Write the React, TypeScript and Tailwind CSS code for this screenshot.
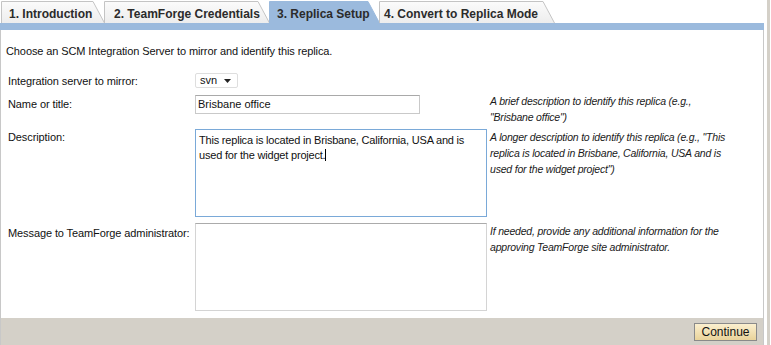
import React from 'react'

const font = { fontFamily: '"Liberation Sans", Arial, sans-serif' }

type TabDef = { label: string; width: number; active?: boolean; pad: number }

const tabs: TabDef[] = [
  { label: '1. Introduction', width: 104, pad: 8 },
  { label: '2. TeamForge Credentials', width: 166, pad: 10 },
  { label: '3. Replica Setup', width: 111, pad: 8, active: true },
  { label: '4. Convert to Replica Mode', width: 176, pad: 5 },
]

function Tab({ t }: { t: TabDef }) {
  const w = t.width
  return (
    <div className="relative h-[22px] shrink-0 -mr-[1px]" style={{ width: w }}>
      <svg className="absolute inset-0" width={w} height={22}>
        <defs>
          <linearGradient id="tabg" x1="0" y1="0" x2="0" y2="1">
            <stop offset="0" stopColor="#fbfbfb" />
            <stop offset="1" stopColor="#ededed" />
          </linearGradient>
        </defs>
        <path
          d={`M0.5,22 V0.5 H${w - 12} L${w - 0.5},22`}
          fill={t.active ? '#9bbadd' : 'url(#tabg)'}
          stroke={t.active ? '#9bbadd' : '#c4c4c4'}
        />
      </svg>
      <span
        className="relative block pt-[4px] text-[12px] font-bold text-[#2b2b2b] whitespace-nowrap"
        style={{ paddingLeft: t.pad }}
      >
        {t.label}
      </span>
    </div>
  )
}

function Help({ children }: { children: React.ReactNode }) {
  return (
    <div className="text-[10.5px] tracking-[-0.2px] italic leading-[16px] text-[#1a1a1a] pl-[1px]">
      {children}
    </div>
  )
}

const row = 'grid grid-cols-[187px_294px_1fr] pl-[7px] items-start text-[11px] leading-[13px]'

export default function App() {
  return (
    <div className="w-[771px] h-[345px] bg-white flex overflow-hidden text-[#111]" style={font}>
      <div className="w-[764px] flex flex-col">
        <div className="h-[23px] pt-[1px] pl-[1px] flex items-end">
          {tabs.map(t => <Tab key={t.label} t={t} />)}
        </div>
        <div className="h-[7px] bg-[#9bbadd]" />
        <div className="flex-1 border-l border-r border-[#c8c8c8] flex flex-col">
          <div className="text-[11px] tracking-[-0.1px] pl-[5px] mt-[15px] leading-[13px]">
            Choose an SCM Integration Server to mirror and identify this replica.
          </div>

          <div className={`${row} mt-[15px] h-[15px]`}>
            <div className="pt-[2px] tracking-[-0.1px]">Integration server to mirror:</div>
            <div className="w-[43px] h-[15px] border border-[#dedede] rounded-[2px] flex items-center pl-[4px]">
              <span>svn</span>
              <svg className="ml-[7px]" width="7" height="4" viewBox="0 0 7 4">
                <path d="M0,0 H7 L3.5,4 Z" fill="#222" />
              </svg>
            </div>
            <div />
          </div>

          <div className={`${row} mt-[5px] h-[32px]`}>
            <div className="pt-[5px] tracking-[-0.1px]">Name or title:</div>
            <div className="pt-[2px]">
              <div className="w-[225px] h-[19px] border border-[#c9c9c9] border-t-[#a9a9a9] px-[2px] leading-[17px]">
                Brisbane office
              </div>
            </div>
            <Help>
              A brief description to identify this replica (e.g.,
              <br />
              "Brisbane office")
            </Help>
          </div>

          <div className={`${row} mt-[4px] h-[88px]`}>
            <div className="pt-[2px] tracking-[-0.1px]">Description:</div>
            <div className="w-[292px] h-[88px] border border-[#7aa9d8] px-[3px] pt-[3px] tracking-[-0.2px] leading-[15px]">
              This replica is located in Brisbane, California, USA and is used for the widget project.
              <span className="inline-block w-[1px] h-[12px] bg-black align-[-2px]" />
            </div>
            <Help>
              A longer description to identify this replica (e.g., "This
              <br />
              replica is located in Brisbane, California, USA and is
              <br />
              used for the widget project")
            </Help>
          </div>

          <div className={`${row} mt-[6px] h-[88px]`}>
            <div className="pt-[4px] tracking-[-0.1px]">Message to TeamForge administrator:</div>
            <div className="w-[292px] h-[88px] border border-[#d4d4d4] border-t-[#ababab]" />
            <Help>
              If needed, provide any additional information for the
              <br />
              approving TeamForge site administrator.
            </Help>
          </div>

          <div className="mt-auto h-[27px] bg-[#d4d0c8] flex items-center justify-end pr-[6px]">
            <button
              className="h-[18px] w-[63px] border border-[#8a8a8a] text-[12px] text-[#111] leading-none"
              style={{ background: 'linear-gradient(#fbefcf, #e9d39a)' }}
            >
              Continue
            </button>
          </div>
        </div>
      </div>
      <div className="w-[3px] ml-[3px] bg-[#d4d0c8]" />
    </div>
  )
}
